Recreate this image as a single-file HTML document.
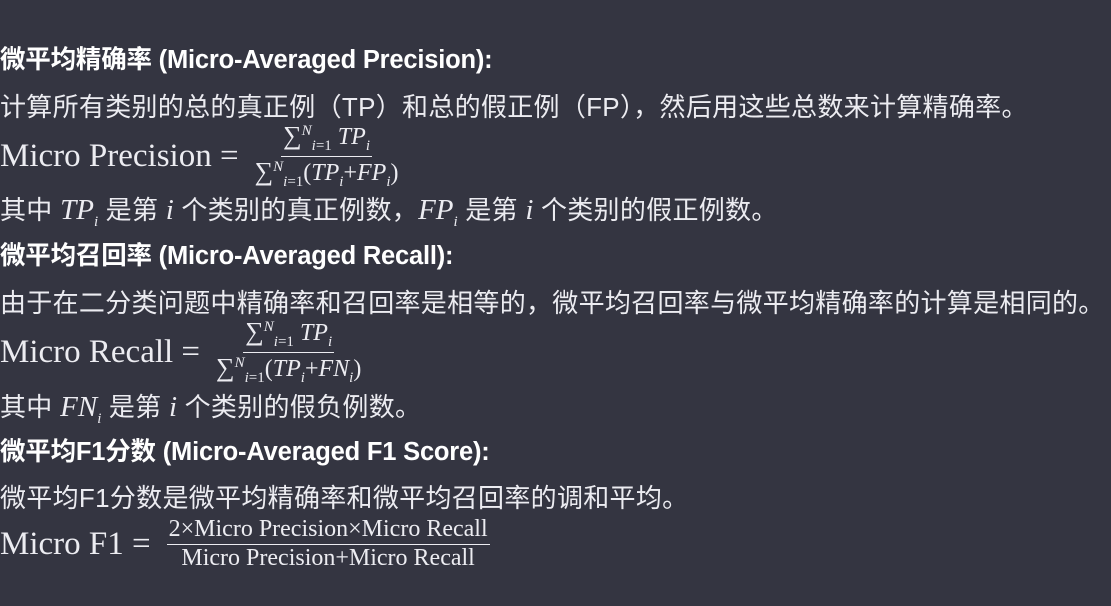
<!DOCTYPE html><html><head><meta charset="utf-8"><style>
body{margin:0;width:1111px;height:606px;background:#343541;color:#ececf1;overflow:hidden;position:relative;font-family:"Liberation Sans","Noto Sans CJK SC",sans-serif}
.l{position:absolute;left:0;white-space:nowrap;line-height:1}
.h{font-size:25.5px;font-weight:bold;color:#fff;letter-spacing:-0.2px}
.t{font-size:26px;letter-spacing:0.3px}
.m{font-family:"Liberation Serif","DejaVu Serif",serif;font-style:italic;letter-spacing:0;font-size:29px}
.f{position:absolute;left:0;white-space:nowrap;font-family:"Liberation Serif","DejaVu Serif",serif;font-size:33px;display:flex;align-items:center}
.fr{display:inline-flex;flex-direction:column;align-items:center;font-size:24px;margin-left:16px;line-height:1.05}
.fr .n{border-bottom:1.3px solid #ececf1;padding:0 2px 1px}
.fr .d{padding-top:1px}
i{font-style:italic}
sub,sup{font-size:15px}
.s{font-size:26px}
</style></head><body>
<div class="l h" style="top:48px">微平均精确率 (Micro-Averaged Precision):</div>
<div class="l t" style="top:94px">计算所有类别的总的真正例（TP）和总的假正例（FP），然后用这些总数来计算精确率。</div>
<div class="f" style="top:124px;height:64px">Micro Precision =<span class="fr"><span class="n"><span class="s">∑</span><sup><i>N</i></sup><sub><i>i</i>=1</sub> <i>TP<sub>i</sub></i></span><span class="d"><span class="s">∑</span><sup><i>N</i></sup><sub><i>i</i>=1</sub>(<i>TP<sub>i</sub></i>+<i>FP<sub>i</sub></i>)</span></span></div>
<div class="l t" style="top:196px">其中 <span class="m">TP<sub>i</sub></span> 是第 <span class="m">i</span> 个类别的真正例数，<span class="m">FP<sub>i</sub></span> 是第 <span class="m">i</span> 个类别的假正例数。</div>
<div class="l h" style="top:244px">微平均召回率 (Micro-Averaged Recall):</div>
<div class="l t" style="top:290px">由于在二分类问题中精确率和召回率是相等的，微平均召回率与微平均精确率的计算是相同的。</div>
<div class="f" style="top:320px;height:64px">Micro Recall =<span class="fr"><span class="n"><span class="s">∑</span><sup><i>N</i></sup><sub><i>i</i>=1</sub> <i>TP<sub>i</sub></i></span><span class="d"><span class="s">∑</span><sup><i>N</i></sup><sub><i>i</i>=1</sub>(<i>TP<sub>i</sub></i>+<i>FN<sub>i</sub></i>)</span></span></div>
<div class="l t" style="top:393px">其中 <span class="m">FN<sub>i</sub></span> 是第 <span class="m">i</span> 个类别的假负例数。</div>
<div class="l h" style="top:440px">微平均F1分数 (Micro-Averaged F1 Score):</div>
<div class="l t" style="top:485px">微平均F1分数是微平均精确率和微平均召回率的调和平均。</div>
<div class="f" style="top:519px;height:50px">Micro F1 =<span class="fr"><span class="n">2×Micro Precision×Micro Recall</span><span class="d">Micro Precision+Micro Recall</span></span></div>
</body></html>
